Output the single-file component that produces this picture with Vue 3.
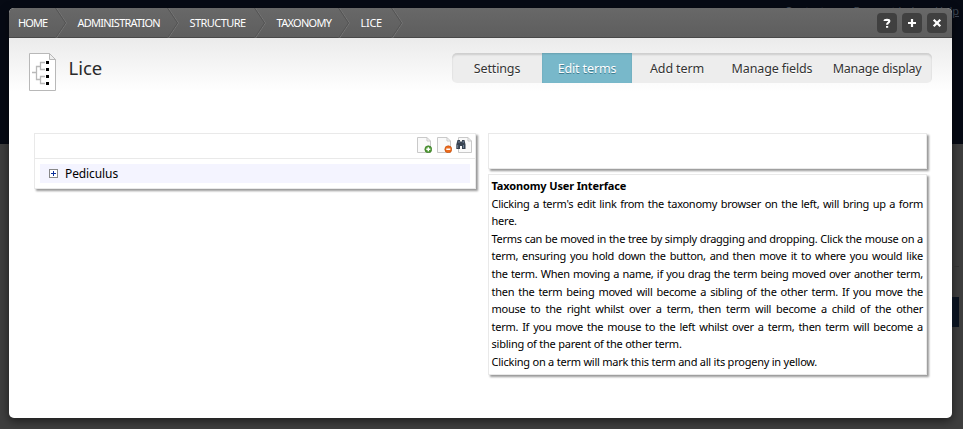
<script setup>
const crumbs = [
  { label: 'HOME', cls: 'c-home' },
  { label: 'ADMINISTRATION', cls: 'c-admin' },
  { label: 'STRUCTURE', cls: 'c-struct' },
  { label: 'TAXONOMY', cls: 'c-tax' },
  { label: 'LICE', cls: 'c-lice' },
]
const tabs = [
  { label: 'Settings', cls: 't-set' },
  { label: 'Edit terms', cls: 't-edit active' },
  { label: 'Add term', cls: 't-add' },
  { label: 'Manage fields', cls: 't-fields' },
  { label: 'Manage display', cls: 't-display' },
]
const help = [
  { text: "Clicking a term's edit link from the taxonomy browser on the left, will bring up a form", fill: true },
  { text: 'here.' },
  { text: 'Terms can be moved in the tree by simply dragging and dropping. Click the mouse on a', fill: true },
  { text: 'term, ensuring you hold down the button, and then move it to where you would like', fill: true },
  { text: 'the term. When moving a name, if you drag the term being moved over another term,', fill: true },
  { text: 'then the term being moved will become a sibling of the other term. If you move the', fill: true },
  { text: 'mouse to the right whilst over a term, then term will become a child of the other', fill: true },
  { text: 'term. If you move the mouse to the left whilst over a term, then term will become a', fill: true },
  { text: 'sibling of the parent of the other term.' },
  { text: 'Clicking on a term will mark this term and all its progeny in yellow.' },
]
</script>

<template>
  <div class="page">
    <div class="links"><span>Contact us</span><span>Request help</span><u>Help</u></div>
    <div class="rule"></div>
    <div class="block"></div>
    <div class="overlay">
      <header>
        <nav class="crumbs">
          <a v-for="c in crumbs" :key="c.label" :class="c.cls"><span>{{ c.label }}</span>
            <svg width="12" height="30" viewBox="0 0 12 30" fill="none"><path d="M1.500 0 L11.500 15 L1.500 30" stroke="#747474" /><path d="M.5 0 L10.500 15 L.5 30" stroke="#545454" /></svg>
          </a>
        </nav>
        <div class="buttons">
          <button><svg viewBox="0 0 20 20"><path d="M7.600 8.100 Q7.600 6.800 10 6.800 Q12.300 6.800 12.300 8.100 Q12.300 9.200 11.100 9.900 Q10.100 10.500 10.100 11.700 M10.100 12.900V14.800" /></svg></button>
          <button><svg viewBox="0 0 20 20"><path d="M10 6V14M6 10H14" /></svg></button>
          <button><svg viewBox="0 0 20 20"><path d="M6.700 6.700L13.300 13.300M13.300 6.700L6.700 13.300" /></svg></button>
        </div>
      </header>
      <div class="title">
        <svg class="doc" width="27" height="38" viewBox="0 0 27 38" fill="none">
          <path d="M.5 .5H20.500L26.500 6.500V37.500H.5Z" fill="#fff" stroke="#b8b8b8" />
          <path d="M20.500 .5V6.500H26.500Z" fill="#eee" stroke="#b8b8b8" />
          <path d="M3 19.500H7M16 9.500H11.500V16.500H16M11.500 13.500H7.500V26.500H11.500M16 23.500H11.500V30.500H16" stroke="#b9b9b9" stroke-width="1.300" />
          <path d="M17 8h3v3h-3zM17 15h3v3h-3zM17 22h3v3h-3zM17 29h3v3h-3z" fill="#000" />
        </svg>
        <h1>Lice</h1>
        <ul class="tabs"><li v-for="t in tabs" :key="t.label" :class="t.cls"><span>{{ t.label }}</span></li></ul>
      </div>
      <main>
        <section class="card tree">
          <div class="tools">
            <svg width="16" height="16" viewBox="0 0 16 16"><path d="M1.500 .5H11L14.500 4V15.500H1.500Z" fill="#fafafa" stroke="#c9c9c9" /><path d="M11 .5V4H14.500" fill="none" stroke="#c9c9c9" /><circle cx="12.300" cy="12.300" r="3.500" fill="#529b38" stroke="#387724" stroke-width=".6" /><path d="M12.300 10.300v4M10.300 12.300h4" stroke="#fff" stroke-width="1.400" /></svg>
            <svg width="16" height="16" viewBox="0 0 16 16"><path d="M1.500 .5H11L14.500 4V15.500H1.500Z" fill="#fafafa" stroke="#c9c9c9" /><path d="M11 .5V4H14.500" fill="none" stroke="#c9c9c9" /><circle cx="12.300" cy="12.300" r="3.500" fill="#ed6b1c" stroke="#bd4d0d" stroke-width=".6" /><path d="M10.300 12.300h4" stroke="#fff" stroke-width="1.400" /></svg>
            <svg width="16" height="16" viewBox="0 0 16 16"><path d="M2.500 .5H12L15.500 4V15.500H2.500Z" fill="#fafafa" stroke="#c9c9c9" /><path d="M12 .5V4H15.500" fill="none" stroke="#c9c9c9" /><path d="M1.500 3h2.500v1.500h2V3h2.500l1 4.500v4.500H6V9H4v3H.300V7.500Z" fill="#394452" /><path d="M1.700 8v3M7.500 8v3M3 4v2M7.200 4v2" stroke="#7d91aa" stroke-width=".8" /></svg>
          </div>
          <div class="row">
            <svg width="9" height="9" viewBox="0 0 9 9"><rect x=".5" y=".5" width="8" height="8" fill="#fff" stroke="#888" /><path d="M2 4.500H7M4.500 2V7" stroke="#0b2f9a" /></svg>
            <span>Pediculus</span>
          </div>
        </section>
        <div class="side">
          <section class="card blank"></section>
          <section class="card help">
            <h2><span>Taxonomy User Interface</span></h2>
            <p v-for="l in help" :key="l.text" :class="{ fill: l.fill }">{{ l.text }}</p>
          </section>
        </div>
      </main>
    </div>
  </div>
</template>

<style>
body { margin: 0; }
</style>
<style scoped>
.page { position: relative; box-sizing: border-box; width: 963px; height: 429px; padding: 8px 11px 11px 9px; overflow: hidden; font-family: "Noto Sans", sans-serif; background: linear-gradient(#060a14 0 144px, #3e3e3e 144px); }
.links { position: absolute; top: 3px; right: 4px; display: flex; gap: 14px; font-size: 11px; line-height: 15px; color: #39414d; }
.rule { position: absolute; left: 940px; top: 266px; width: 19px; height: 1px; background: #303030; }
.block { position: absolute; left: 940px; top: 297px; width: 19px; height: 30px; background: #0a121e; }
.overlay { position: relative; height: 410px; border-radius: 5px; overflow: hidden; background: #fff; }
.page::before { content: ""; position: absolute; left: 9px; top: 8px; width: 943px; height: 410px; border-radius: 5px; box-shadow: 0 3px 10px #0008; }
header { box-sizing: border-box; height: 30px; display: flex; justify-content: space-between; background: linear-gradient(#686868, #5e5e5e); border-bottom: 1px solid #484848; }
.crumbs { display: flex; }
.crumbs a { display: flex; justify-content: space-between; box-sizing: border-box; padding-left: 10.5px; font-size: 11px; line-height: 30px; color: #fff; white-space: nowrap; letter-spacing: -.55px; }
.crumbs a span { width: 0; }
.crumbs svg { flex: none; }
.crumbs .c-home { width: 58px; padding-left: 9px; letter-spacing: -.9px; }
.crumbs .c-admin { width: 112px; letter-spacing: -.75px; }
.c-struct { width: 87px; }
.crumbs .c-tax { width: 84px; letter-spacing: -.7px; }
.crumbs .c-lice { width: 53px; letter-spacing: -.3px; }
.buttons { display: flex; gap: 5px; padding: 5px 5px 0 0; }
button { width: 20px; height: 20px; padding: 0; border: 0; border-radius: 4px; background: #404040; }
button svg { display: block; fill: none; stroke: #fff; stroke-width: 2.2; }
.title { box-sizing: border-box; height: 54px; display: flex; align-items: flex-start; padding: 15px 20px 0; background: linear-gradient(#ebebeb, #fff); }
h1 { margin: 0 0 0 12.5px; font-size: 18.5px; font-weight: 400; line-height: 30px; color: #2a2a2a; }
.tabs { display: flex; margin: 0 0 0 auto; padding: 0; list-style: none; width: 480px; height: 30px; border-radius: 5px; background: #ededed; box-shadow: inset 0 2px 2px #0002; }
.tabs li { width: 90px; display: flex; justify-content: center; font-size: 12.5px; line-height: 32px; height: 30px; color: #333; text-shadow: 0 1px #fff; white-space: nowrap; letter-spacing: -.13px; }
.tabs .active { color: #fff; background: #78b8ca; text-shadow: 0 1px #3f7d91; box-shadow: inset 0 1px 2px #0002; }
.tabs .t-fields { width: 100px; }
.tabs .t-display { width: 110px; letter-spacing: -.26px; }
main { display: flex; align-items: flex-start; gap: 12px; padding: 41px 25px 0 25px; }
.card { box-sizing: border-box; border: 1px solid #e9e9e9; background: #fff; box-shadow: 2px 2px 2px #999; }
.tree { width: 442px; height: 56px; }
.tools { box-sizing: border-box; height: 25px; display: flex; justify-content: flex-end; gap: 4px; padding: 3px 3px 0 0; border-bottom: 1px solid #e9e9e9; }
.row { display: flex; align-items: center; gap: 7px; height: 19px; margin: 5px; padding-left: 9px; background: #f4f4ff; font-size: 12px; color: #000; letter-spacing: -.1px; }
.row span { line-height: 20px; padding-top: 1px; }
.side { display: flex; flex-direction: column; gap: 5px; width: 439px; }
.blank { height: 36px; }
.help { height: 201px; padding: 2px 3px 0 2.5px; font-size: 11px; line-height: 17.6px; color: #000; }
h2 { margin: 0; font-size: 11px; line-height: 17.6px; letter-spacing: -.14px; }
.help p { margin: 0; white-space: nowrap; letter-spacing: -.23px; }
.help .fill { letter-spacing: -.27px; text-align-last: justify; }
</style>
